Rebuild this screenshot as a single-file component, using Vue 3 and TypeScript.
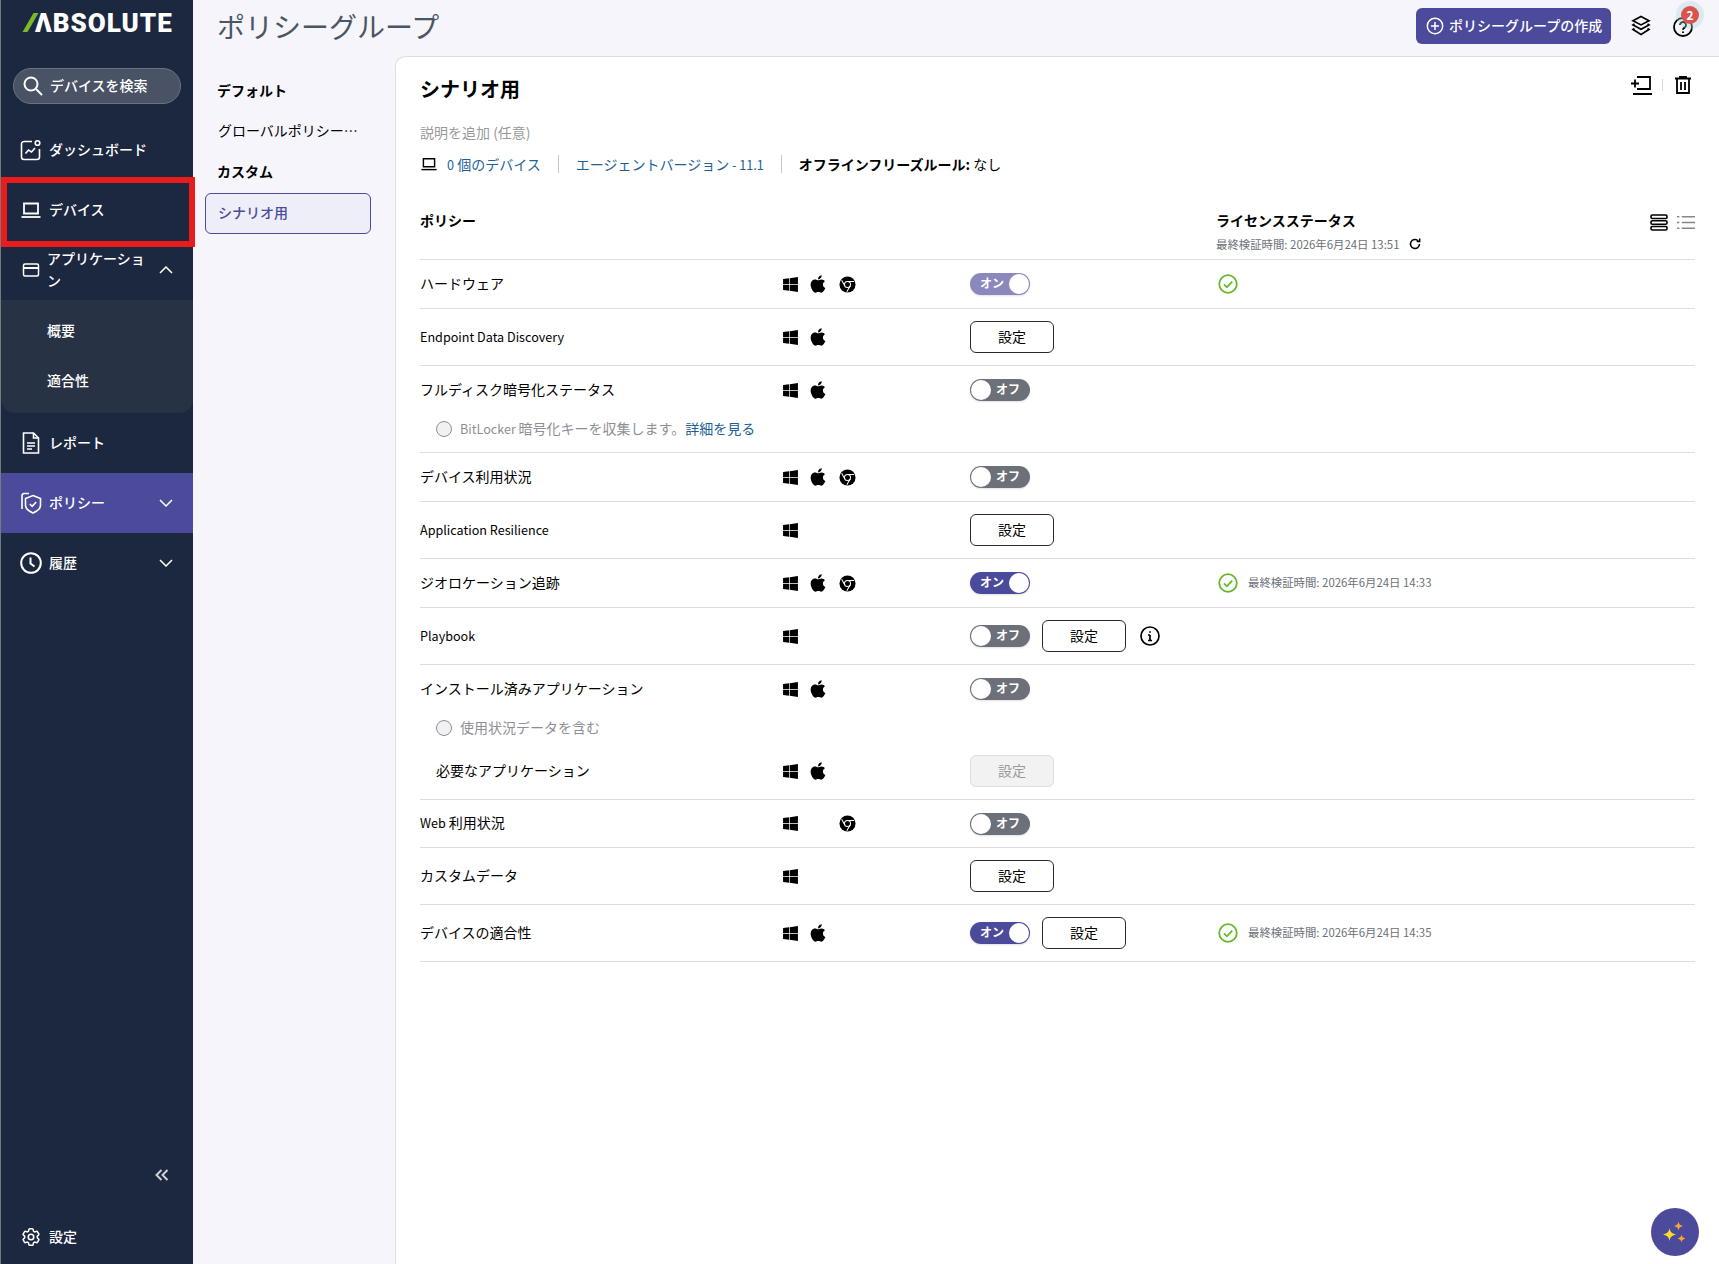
<script setup lang="ts">
type Os = "win" | "apple" | "chrome" | "";
type Toggle = "dim" | "on" | "off";

interface Line {
  name: string;
  lead?: string;
  os: Os[];
  toggle?: Toggle;
  button?: boolean;
  info?: boolean;
  check?: boolean;
  verified?: string;
  short?: boolean;
}

interface Policy {
  main: Line;
  note?: { lead?: string; text: string; link?: string };
  extra?: Line;
}

const policies: Policy[] = [
  { main: { name: "ハードウェア", os: ["win", "apple", "chrome"], toggle: "dim", check: true } },
  { main: { lead: "Endpoint Data Discovery", name: "", os: ["win", "apple"], button: true } },
  {
    main: { name: "フルディスク暗号化ステータス", os: ["win", "apple"], toggle: "off" },
    note: { lead: "BitLocker ", text: "暗号化キーを収集します。", link: "詳細を見る" },
  },
  { main: { name: "デバイス利用状況", os: ["win", "apple", "chrome"], toggle: "off" } },
  { main: { lead: "Application Resilience", name: "", os: ["win"], button: true } },
  {
    main: {
      name: "ジオロケーション追跡",
      os: ["win", "apple", "chrome"],
      toggle: "on",
      check: true,
      verified: "最終検証時間: 2026年6月24日 14:33",
    },
  },
  { main: { lead: "Playbook", name: "", os: ["win"], toggle: "off", button: true, info: true } },
  {
    main: { name: "インストール済みアプリケーション", os: ["win", "apple"], toggle: "off" },
    note: { text: "使用状況データを含む" },
    extra: { name: "必要なアプリケーション", os: ["win", "apple"], button: true },
  },
  { main: { lead: "Web ", name: "利用状況", os: ["win", "", "chrome"], toggle: "off", short: true } },
  { main: { name: "カスタムデータ", os: ["win"], button: true } },
  {
    main: {
      name: "デバイスの適合性",
      os: ["win", "apple"],
      toggle: "on",
      button: true,
      check: true,
      verified: "最終検証時間: 2026年6月24日 14:35",
    },
  },
];
</script>

<template>
  <div class="app">
    <svg class="defs" aria-hidden="true">
      <symbol id="win" viewBox="0 0 448 512">
        <path fill="#000" d="M0 93.7l183.6-25.3v177.4H0V93.7zm0 324.6l183.6 25.3V268.4H0v149.9zm203.8 28L448 480V268.4H203.8v177.9zm0-380.6v180.1H448V32L203.8 65.7z" />
      </symbol>
      <symbol id="apple" viewBox="0 0 384 512">
        <path fill="#000" d="M318.7 268.7c-.2-36.7 16.4-64.4 50-84.8-18.8-26.9-47.2-41.7-84.7-44.6-35.5-2.8-74.3 20.7-88.5 20.7-15 0-49.4-19.7-76.4-19.7C63.3 141.2 4 184.8 4 273.5q0 39.3 14.4 81.2c12.8 36.7 59 126.7 107.2 125.2 25.2-.6 43-17.9 75.8-17.9 31.8 0 48.3 17.9 76.4 17.9 48.6-.7 90.4-82.5 102.6-119.3-65.2-30.7-61.7-90-61.7-91.9zm-56.6-164.2c27.3-32.4 24.8-61.9 24-72.5-24.1 1.4-52 16.4-67.9 34.9-17.5 19.8-27.8 44.3-25.6 71.9 26.1 2 49.9-11.4 69.5-34.3z" />
      </symbol>
      <symbol id="chrome" viewBox="0 0 18 18">
        <circle cx="9" cy="9" r="8.5" fill="#000" />
        <circle cx="9" cy="9" r="3.2" fill="none" stroke="#fff" stroke-width="1.1" />
        <path d="M9 5.8h7M6.2 10.6L2.8 4.6M11.8 10.6L8.3 16.6" stroke="#fff" stroke-width="1.1" fill="none" />
      </symbol>
      <symbol id="check" viewBox="0 0 20 20">
        <circle cx="10" cy="10" r="8.8" fill="none" stroke="#66b82c" stroke-width="1.8" />
        <path d="M6 10.4l2.9 2.9L14.2 7.6" fill="none" stroke="#66b82c" stroke-width="1.8" />
      </symbol>
      <symbol id="laptop" viewBox="0 0 20 20">
        <path d="M3 3.500h14v10H3z" fill="none" stroke="currentColor" stroke-width="1.800" />
        <path d="M0.500 17h19" stroke="currentColor" stroke-width="1.800" />
      </symbol>
      <symbol id="chev" viewBox="0 0 14 8">
        <path d="M1 1l6 6 6-6" fill="none" stroke="currentColor" stroke-width="1.500" />
      </symbol>
    </svg>

    <aside class="sidebar">
      <div class="logo"><i class="slash"></i><span>ΛBSOLUTE</span></div>

      <div class="search">
        <svg width="22" height="22" viewBox="0 0 22 22" fill="none" stroke="#fff" stroke-width="2">
          <circle cx="9" cy="9" r="6.500" />
          <path d="M14 14l6 6" />
        </svg>
        <span>デバイスを検索</span>
      </div>

      <nav class="menu">
        <a class="item">
          <svg class="ico" viewBox="0 0 22 22" fill="none" stroke="#fff" stroke-width="1.600">
            <path d="M12 2.500H4A2.500 2.500 0 0 0 1.500 5v13A2.500 2.500 0 0 0 4 20.500h13a2.500 2.500 0 0 0 2.500-2.500v-8" />
            <circle cx="17.500" cy="4" r="2.300" />
            <path d="M5.500 14.500l3-3.500 3 2 3.500-4" />
          </svg>
          <span>ダッシュボード</span>
        </a>
        <a class="item">
          <svg class="ico laptop"><use href="#laptop" /></svg>
          <span>デバイス</span>
        </a>
        <a class="item wrap">
          <svg class="ico small" viewBox="0 0 18 18" fill="none" stroke="#fff" stroke-width="1.500">
            <rect x="1.500" y="3" width="15" height="12" rx="1.500" />
            <path d="M1.500 7h15" stroke-width="2" />
          </svg>
          <span class="label">アプリケーション</span>
          <svg class="chev up"><use href="#chev" /></svg>
        </a>
        <div class="submenu">
          <a><span>概要</span></a>
          <a><span>適合性</span></a>
        </div>
        <a class="item">
          <svg class="ico" viewBox="0 0 22 22" fill="none" stroke="#fff" stroke-width="1.600">
            <path d="M3.500 1h10l5 5v15h-15z" />
            <path d="M13.500 1v5h5M7 11h8M7 14h8M7 17h5" />
          </svg>
          <span>レポート</span>
        </a>
        <a class="item active">
          <svg class="ico" viewBox="0 0 22 22" fill="none" stroke="#fff" stroke-width="1.600">
            <path d="M2 17V3.500a2 2 0 0 1 2-2h5" />
            <path d="M13 3.500l7.500 3v7c0 3.500-3 5.500-7.500 7.500-4.500-2-7.500-4-7.500-7.500v-7z" />
            <path d="M9.800 12l2.400 2.400 4-4.400" />
          </svg>
          <span class="label">ポリシー</span>
          <svg class="chev"><use href="#chev" /></svg>
        </a>
        <a class="item">
          <svg class="ico" viewBox="0 0 22 22" fill="none" stroke="#fff" stroke-width="2">
            <circle cx="11" cy="11" r="9.800" />
            <path d="M10.500 5.500v6l4 3" />
          </svg>
          <span class="label">履歴</span>
          <svg class="chev"><use href="#chev" /></svg>
        </a>
      </nav>

      <div class="collapse">
        <svg width="14" height="12" viewBox="0 0 14 12" fill="none" stroke="#cfd1d8" stroke-width="2">
          <path d="M6.500 1L1.500 6l5 5M12.500 1l-5 5 5 5" />
        </svg>
      </div>
      <a class="item settings">
        <svg class="ico" viewBox="0 0 24 24" fill="none" stroke="#fff" stroke-width="1.700">
          <circle cx="12" cy="12" r="3" />
          <path d="M9.594 3.940c.09-.542.56-.94 1.110-.94h2.593c.55 0 1.020.398 1.110.94l.213 1.281c.063.374.313.686.645.870.074.040.147.083.22.127.325.196.72.257 1.075.124l1.217-.456a1.125 1.125 0 0 1 1.370.490l1.296 2.247a1.125 1.125 0 0 1-.26 1.431l-1.003.827c-.293.241-.438.613-.43.992a7.723 7.723 0 0 1 0 .255c-.008.378.137.75.43.991l1.004.827c.424.35.534.955.26 1.430l-1.298 2.247a1.125 1.125 0 0 1-1.369.491l-1.217-.456c-.355-.133-.75-.072-1.076.124a6.470 6.470 0 0 1-.22.128c-.331.183-.581.495-.644.869l-.213 1.281c-.09.543-.56.94-1.110.94h-2.594c-.55 0-1.019-.398-1.110-.94l-.213-1.281c-.062-.374-.312-.686-.644-.870a6.520 6.520 0 0 1-.22-.127c-.325-.196-.72-.257-1.076-.124l-1.217.456a1.125 1.125 0 0 1-1.369-.490l-1.297-2.247a1.125 1.125 0 0 1 .26-1.431l1.004-.827c.292-.24.437-.613.43-.991a6.932 6.932 0 0 1 0-.255c.007-.38-.138-.751-.43-.992l-1.004-.827a1.125 1.125 0 0 1-.26-1.430l1.297-2.247a1.125 1.125 0 0 1 1.370-.491l1.216.456c.356.133.751.072 1.076-.124.072-.044.146-.086.22-.128.332-.183.582-.495.644-.869l.214-1.280Z" />
        </svg>
        <span>設定</span>
      </a>
    </aside>

    <div class="redbox"></div>

    <div class="main">
      <header class="topbar">
        <h1>ポリシーグループ</h1>
        <button class="create">
          <svg width="18" height="18" viewBox="0 0 18 18" fill="none" stroke="#fff" stroke-width="1.500">
            <circle cx="9" cy="9" r="7.700" />
            <path d="M9 5v8M5 9h8" />
          </svg>
          <span>ポリシーグループの作成</span>
        </button>
        <svg class="layers" width="20" height="22" viewBox="0 0 20 22" fill="none" stroke="#000" stroke-width="1.700">
          <path d="M10 1.500l8 4.200-8 4.200-8-4.200z" />
          <path d="M3.500 9l-1.500 1 8 4.200 8-4.200-1.500-1" />
          <path d="M3.500 13.500l-1.500 1 8 5 8-5-1.500-1" />
        </svg>
        <div class="help">
          <svg width="20" height="20" viewBox="0 0 20 20" fill="none" stroke="#000" stroke-width="1.800">
            <circle cx="10" cy="10" r="9" />
            <path d="M7 8a3 3 0 1 1 4.500 2.600c-1 .6-1.500 1-1.500 2.100" />
            <path d="M10 14.500v1.500" />
          </svg>
          <span class="badge">2</span>
        </div>
      </header>

      <div class="content">
        <nav class="groups">
          <div class="group-title">デフォルト</div>
          <div class="group-link">グローバルポリシー…</div>
          <div class="group-title">カスタム</div>
          <div class="group-selected">シナリオ用</div>
        </nav>

        <section class="panel">
          <div class="panel-head">
            <h2>シナリオ用</h2>
            <div class="actions">
              <svg width="21" height="20" viewBox="0 0 21 20" fill="none" stroke="#000" stroke-width="1.800">
                <path d="M6 2h13v12H6" />
                <path d="M2 19h19M0 8.500h8M4 4.500v8" />
              </svg>
              <i class="divider"></i>
              <svg width="16" height="18" viewBox="0 0 16 18" fill="none" stroke="#000" stroke-width="1.800">
                <path d="M0 2.500h16M5 2.500V1h6v1.500M2 2.500V17h12V2.500M6 6v8M10 6v8" />
              </svg>
            </div>
          </div>

          <p class="desc">説明を追加 (任意)</p>

          <div class="meta">
            <svg class="meta-ico"><use href="#laptop" /></svg>
            <a class="link"><span class="lat">0</span> 個のデバイス</a>
            <i class="sep"></i>
            <a class="link">エージェントバージョン<span class="lat"> - 11.1</span></a>
            <i class="sep"></i>
            <span><b>オフラインフリーズルール:</b> なし</span>
          </div>

          <div class="table-head">
            <b class="th-policy">ポリシー</b>
            <div class="th-status">
              <b>ライセンスステータス</b>
              <div class="th-sub">
                最終検証時間: 2026年6月24日 13:51
                <svg width="12" height="12" viewBox="0 0 12 12" fill="none" stroke="#000" stroke-width="1.500">
                  <path d="M10.500 6a4.500 4.500 0 1 1-1.300-3.200" />
                  <path d="M10.700 0.500v3h-3" />
                </svg>
              </div>
            </div>
            <div class="views">
              <svg width="18" height="17" viewBox="0 0 18 17" fill="none" stroke="#000" stroke-width="1.600">
                <rect x="1" y="1" width="16" height="3.500" rx="1.200" />
                <rect x="1" y="6.800" width="16" height="3.500" rx="1.200" />
                <rect x="1" y="12.500" width="16" height="3.500" rx="1.200" />
              </svg>
              <svg width="18" height="17" viewBox="0 0 19 17" fill="none" stroke="#85878c" stroke-width="1.600">
                <path d="M5 2.500h14M5 8.500h14M5 14.500h14M0 2.500h2.500M0 8.500h2.500M0 14.500h2.500" />
              </svg>
            </div>
          </div>

          <div v-for="p in policies" :key="p.main.name + p.main.lead" class="policy" :class="{ withnote: p.note && !p.extra }">
            <div class="line" :class="{ tall: p.main.button, short: p.main.short }">
              <div class="name"><span v-if="p.main.lead" class="lat">{{ p.main.lead }}</span>{{ p.main.name }}</div>
              <div class="os">
                <span v-for="(o, i) in p.main.os" :key="i" class="os-slot">
                  <svg v-if="o" :class="'os-' + o"><use :href="'#' + o" /></svg>
                </span>
              </div>
              <div class="controls">
                <div v-if="p.main.toggle" class="toggle" :class="p.main.toggle">
                  <template v-if="p.main.toggle === 'off'"><i class="knob"></i><span>オフ</span></template>
                  <template v-else><span>オン</span><i class="knob"></i></template>
                </div>
                <button v-if="p.main.button" class="cfg">設定</button>
                <svg v-if="p.main.info" class="info" width="20" height="20" viewBox="0 0 20 20" fill="none" stroke="#000" stroke-width="1.700">
                  <circle cx="10" cy="10" r="9" />
                  <path d="M10 9v5.500M8 9h2M8 14.500h4M10 5.200v1.600" />
                </svg>
              </div>
              <div class="status">
                <svg v-if="p.main.check" class="ok"><use href="#check" /></svg>
                <span v-if="p.main.verified">{{ p.main.verified }}</span>
              </div>
            </div>

            <div v-if="p.note" class="note">
              <i class="radio"></i>
              <span><span v-if="p.note.lead" class="lat">{{ p.note.lead }}</span>{{ p.note.text }}<a v-if="p.note.link" class="link">{{ p.note.link }}</a></span>
            </div>

            <div v-if="p.extra" class="line tall">
              <div class="name nested">{{ p.extra.name }}</div>
              <div class="os">
                <span v-for="o in p.extra.os" :key="o" class="os-slot">
                  <svg :class="'os-' + o"><use :href="'#' + o" /></svg>
                </span>
              </div>
              <div class="controls"><button class="cfg disabled">設定</button></div>
              <div class="status"></div>
            </div>
          </div>
        </section>
      </div>
    </div>

    <button class="spark">
      <svg width="26" height="26" viewBox="0 0 26 26">
        <path d="M7.500 9c.7 4 2 5.300 6.500 6.500-4.500 1.200-5.800 2.500-6.500 6.500-.7-4-2-5.300-6.500-6.500 4.500-1.200 5.800-2.500 6.500-6.500z" fill="#ffd92e" />
        <path d="M16.500 2.500c.5 2.700 1.400 3.600 4.500 4.500-3.100.9-4 1.800-4.500 4.500-.5-2.700-1.400-3.600-4.500-4.500 3.100-.9 4-1.800 4.500-4.500z" fill="#f6a72b" />
        <path d="M19.500 15.500c.4 2.300 1.200 3.100 4 4-2.800.9-3.600 1.700-4 4-.4-2.300-1.200-3.100-4-4 2.800-.9 3.600-1.700 4-4z" fill="#f6a72b" />
      </svg>
    </button>
  </div>
</template>

<style scoped>
.app {
  display: flex;
  height: 1264px;
  overflow: hidden;
  position: relative;
  background: #f5f5fb;
  color: #000;
  font-family: "Noto Sans CJK JP", "Noto Sans", sans-serif;
  font-size: 14px;
  line-height: 20px;
}
.defs {
  position: absolute;
  width: 0;
  height: 0;
}
.lat {
  font-size: 12.600px;
  line-height: 1;
}

/* sidebar */
.sidebar {
  width: 192px;
  flex: none;
  border-left: 1px solid #77797d;
  background: #1c2740;
  color: #fff;
  display: flex;
  flex-direction: column;
}
.logo {
  height: 44px;
  box-sizing: border-box;
  padding: 1px 0 0 23px;
  display: flex;
  align-items: center;
  font-family: Roboto, sans-serif;
  font-weight: 900;
  font-size: 26px;
  letter-spacing: 1px;
}
.slash {
  width: 5px;
  height: 19px;
  background: #7ab929;
  transform: skewX(-30deg);
  margin: 0 2px 0 4px;
}
.search {
  margin: 24px 12px 16px 12px;
  height: 36px;
  box-sizing: border-box;
  border: 1px solid #6b7382;
  border-radius: 18px;
  background: #4a5365;
  display: flex;
  align-items: center;
  gap: 6px;
  padding-left: 8px;
  font-weight: 500;
}
.search span,
.item span,
.submenu span,
.create span {
  padding-bottom: 2px;
}
.note > span {
  padding-bottom: 3px;
}
.menu {
  display: flex;
  flex-direction: column;
}
.item {
  height: 60px;
  flex: none;
  display: flex;
  align-items: center;
  padding-left: 19px;
  padding-right: 20px;
  gap: 7px;
  font-weight: 500;
}
.item .label {
  flex: 1;
}
.item.wrap {
  line-height: 22px;
  padding-left: 20px;
}
.item.active {
  background: #4c4a9b;
}
.ico {
  width: 22px;
  height: 22px;
  flex: none;
  color: #fff;
}
.ico.laptop {
  width: 20px;
  height: 20px;
  margin: 0 1px;
}
.ico.small {
  width: 18px;
  height: 18px;
  margin: 0 0 0 1px;
}
.chev {
  width: 14px;
  height: 8px;
  flex: none;
  color: #fff;
}
.chev.up {
  transform: rotate(180deg);
}
.submenu {
  background: #283245;
  border-radius: 0 0 14px 14px;
  height: 113px;
  padding-top: 6px;
  box-sizing: border-box;
  font-weight: 500;
}
.submenu a {
  display: flex;
  align-items: center;
  height: 50px;
  padding-left: 46px;
}
.collapse {
  margin-top: auto;
  height: 24px;
  display: flex;
  align-items: center;
  justify-content: flex-end;
  padding-right: 24px;
  margin-bottom: 21px;
}
.settings {
  height: 56px;
  box-sizing: border-box;
  padding-top: 2px;
}

.redbox {
  position: absolute;
  left: 1px;
  top: 177px;
  width: 194px;
  height: 70px;
  box-sizing: border-box;
  border: 6px solid #e81c1c;
  pointer-events: none;
}

/* top bar */
.main {
  flex: 1;
  min-width: 0;
  display: flex;
  flex-direction: column;
}
.topbar {
  height: 56px;
  flex: none;
  display: flex;
  align-items: center;
  padding: 0 26px 0 24px;
}
.topbar h1 {
  margin: -4px 0 0;
  font-size: 28px;
  line-height: 40px;
  font-weight: 400;
  color: #4c5564;
}
.create {
  margin: -5px 0 0 auto;
  height: 36px;
  width: 195px;
  border: 0;
  border-radius: 6px;
  background: #4c4a9b;
  color: #fff;
  font: inherit;
  font-weight: 500;
  display: flex;
  align-items: center;
  gap: 5px;
  padding: 0 0 0 10px;
  white-space: nowrap;
}
.layers {
  margin-left: 20px;
  margin-top: -4px;
}
.help {
  position: relative;
  margin-left: 22px;
  width: 20px;
  height: 20px;
  margin-top: -2px;
}
.help > svg {
  display: block;
}
.badge {
  position: absolute;
  left: 8px;
  top: -11px;
  width: 18px;
  height: 18px;
  border-radius: 50%;
  background: #d9534f;
  box-shadow: 0 0 0 5px rgba(170, 215, 220, 0.35);
  color: #fff;
  font-size: 12px;
  font-weight: 700;
  line-height: 18px;
  text-align: center;
}

/* groups column */
.content {
  flex: 1;
  display: flex;
  min-height: 0;
}
.groups {
  width: 202px;
  flex: none;
  box-sizing: border-box;
  padding: 14px 12px 0;
}
.group-title,
.group-link {
  height: 40px;
  line-height: 40px;
  padding-left: 12px;
}
.group-link {
  height: 41px;
  padding-left: 13px;
}
.group-title {
  font-weight: 700;
}
.group-selected {
  margin-top: 2px;
  width: 166px;
  height: 41px;
  box-sizing: border-box;
  border: 1px solid #4c4a9b;
  border-radius: 6px;
  background: #eeeef8;
  color: #4c4a9b;
  line-height: 37px;
  padding-left: 12px;
  font-weight: 500;
}

/* main panel */
.panel {
  flex: 1;
  min-width: 0;
  background: #fff;
  border-top: 1px solid #dedede;
  border-left: 1px solid #dedede;
  border-top-left-radius: 10px;
  padding: 18px 24px 0 24px;
}
.panel-head {
  display: flex;
  justify-content: space-between;
  align-items: flex-start;
}
.panel-head h2 {
  margin: 0;
  font-size: 20px;
  line-height: 28px;
  font-weight: 700;
}
.actions {
  display: flex;
  align-items: center;
  gap: 10px;
  padding-right: 4px;
  height: 20px;
}
.actions .divider {
  width: 1px;
  height: 12px;
  background: #d8d8d8;
  margin-right: 2px;
}
.desc {
  margin: 19px 0 0;
  color: #9a9a9a;
}
.meta {
  margin-top: 12px;
  display: flex;
  align-items: center;
}
.meta-ico {
  width: 16px;
  height: 16px;
  color: #000;
  margin: 0 10px 0 1px;
}
.link {
  color: #1f5f99;
}
.sep {
  width: 1px;
  height: 18px;
  background: #c8c8c8;
  margin: 0 17px;
}
.table-head {
  margin-top: 36px;
  height: 49px;
  border-bottom: 1px solid #dedede;
  display: grid;
  grid-template-columns: 796px 1fr auto;
}
.th-status b {
  display: block;
}
.th-sub {
  margin-top: 6px;
  font-size: 11.400px;
  line-height: 16px;
  color: #6b7078;
  display: flex;
  align-items: center;
  gap: 9px;
  white-space: nowrap;
}
.views {
  display: flex;
  gap: 9px;
  align-items: flex-start;
  padding-top: 4px;
}

/* rows */
.policy {
  border-bottom: 1px solid #dedede;
}
.policy.withnote {
  padding-bottom: 8px;
}
.line {
  height: 48px;
  display: grid;
  grid-template-columns: 363px 187px 246px 1fr;
  align-items: center;
}
.line.tall {
  height: 56px;
}
.line.short {
  height: 47px;
}
.name {
  padding-bottom: 3px;
}
.name.nested {
  padding-left: 16px;
}
.os {
  display: flex;
}
.os-slot {
  width: 28px;
  height: 18px;
  display: flex;
  align-items: center;
}
.os-win {
  width: 15px;
  height: 17px;
}
.os-apple {
  width: 16px;
  height: 20px;
  margin-left: -1px;
  margin-top: -1px;
  flex: none;
}
.os-chrome {
  width: 17px;
  height: 17px;
}
.controls {
  display: flex;
  align-items: center;
  gap: 12px;
}
.info {
  margin-left: 2px;
}
.toggle {
  width: 60px;
  height: 22px;
  box-sizing: border-box;
  border-radius: 11px;
  padding: 1px;
  display: flex;
  align-items: center;
  justify-content: space-between;
  color: #fff;
  font-size: 12px;
  font-weight: 700;
  box-shadow: 0 1px 2px rgba(0, 0, 0, 0.12);
}
.toggle span {
  padding-bottom: 2px;
}
.toggle.off {
  background: #6c7079;
}
.toggle.off span {
  margin-right: 9px;
}
.toggle.on {
  background: #4c4a9b;
}
.toggle.dim {
  background: #8a88bd;
}
.toggle.on span,
.toggle.dim span {
  margin-left: 9px;
}
.knob {
  width: 20px;
  height: 20px;
  border-radius: 50%;
  background: #fff;
}
.cfg {
  width: 84px;
  height: 32px;
  box-sizing: border-box;
  border: 1px solid #2b2b2b;
  border-radius: 6px;
  background: #fff;
  color: #000;
  font: inherit;
  padding: 0 0 3px;
}
.cfg.disabled {
  background: #f2f2f2;
  border-color: #dedede;
  color: #9a9a9a;
}
.status {
  display: flex;
  align-items: center;
  gap: 10px;
  padding-left: 2px;
  font-size: 11.400px;
  color: #6b7078;
}
.status span {
  padding-bottom: 3px;
}
.ok {
  width: 20px;
  height: 20px;
}
.note {
  height: 30px;
  display: flex;
  align-items: center;
  gap: 8px;
  padding-left: 16px;
  color: #8d8f96;
}
.radio {
  width: 16px;
  height: 16px;
  box-sizing: border-box;
  border-radius: 50%;
  border: 1.500px solid #8c8f96;
  background: #f1f1f3;
}
.spark {
  position: absolute;
  left: 1651px;
  top: 1208px;
  width: 48px;
  height: 48px;
  border: 0;
  border-radius: 50%;
  background: #4c4a9b;
  padding: 0;
  display: flex;
  align-items: center;
  justify-content: center;
}
</style>
